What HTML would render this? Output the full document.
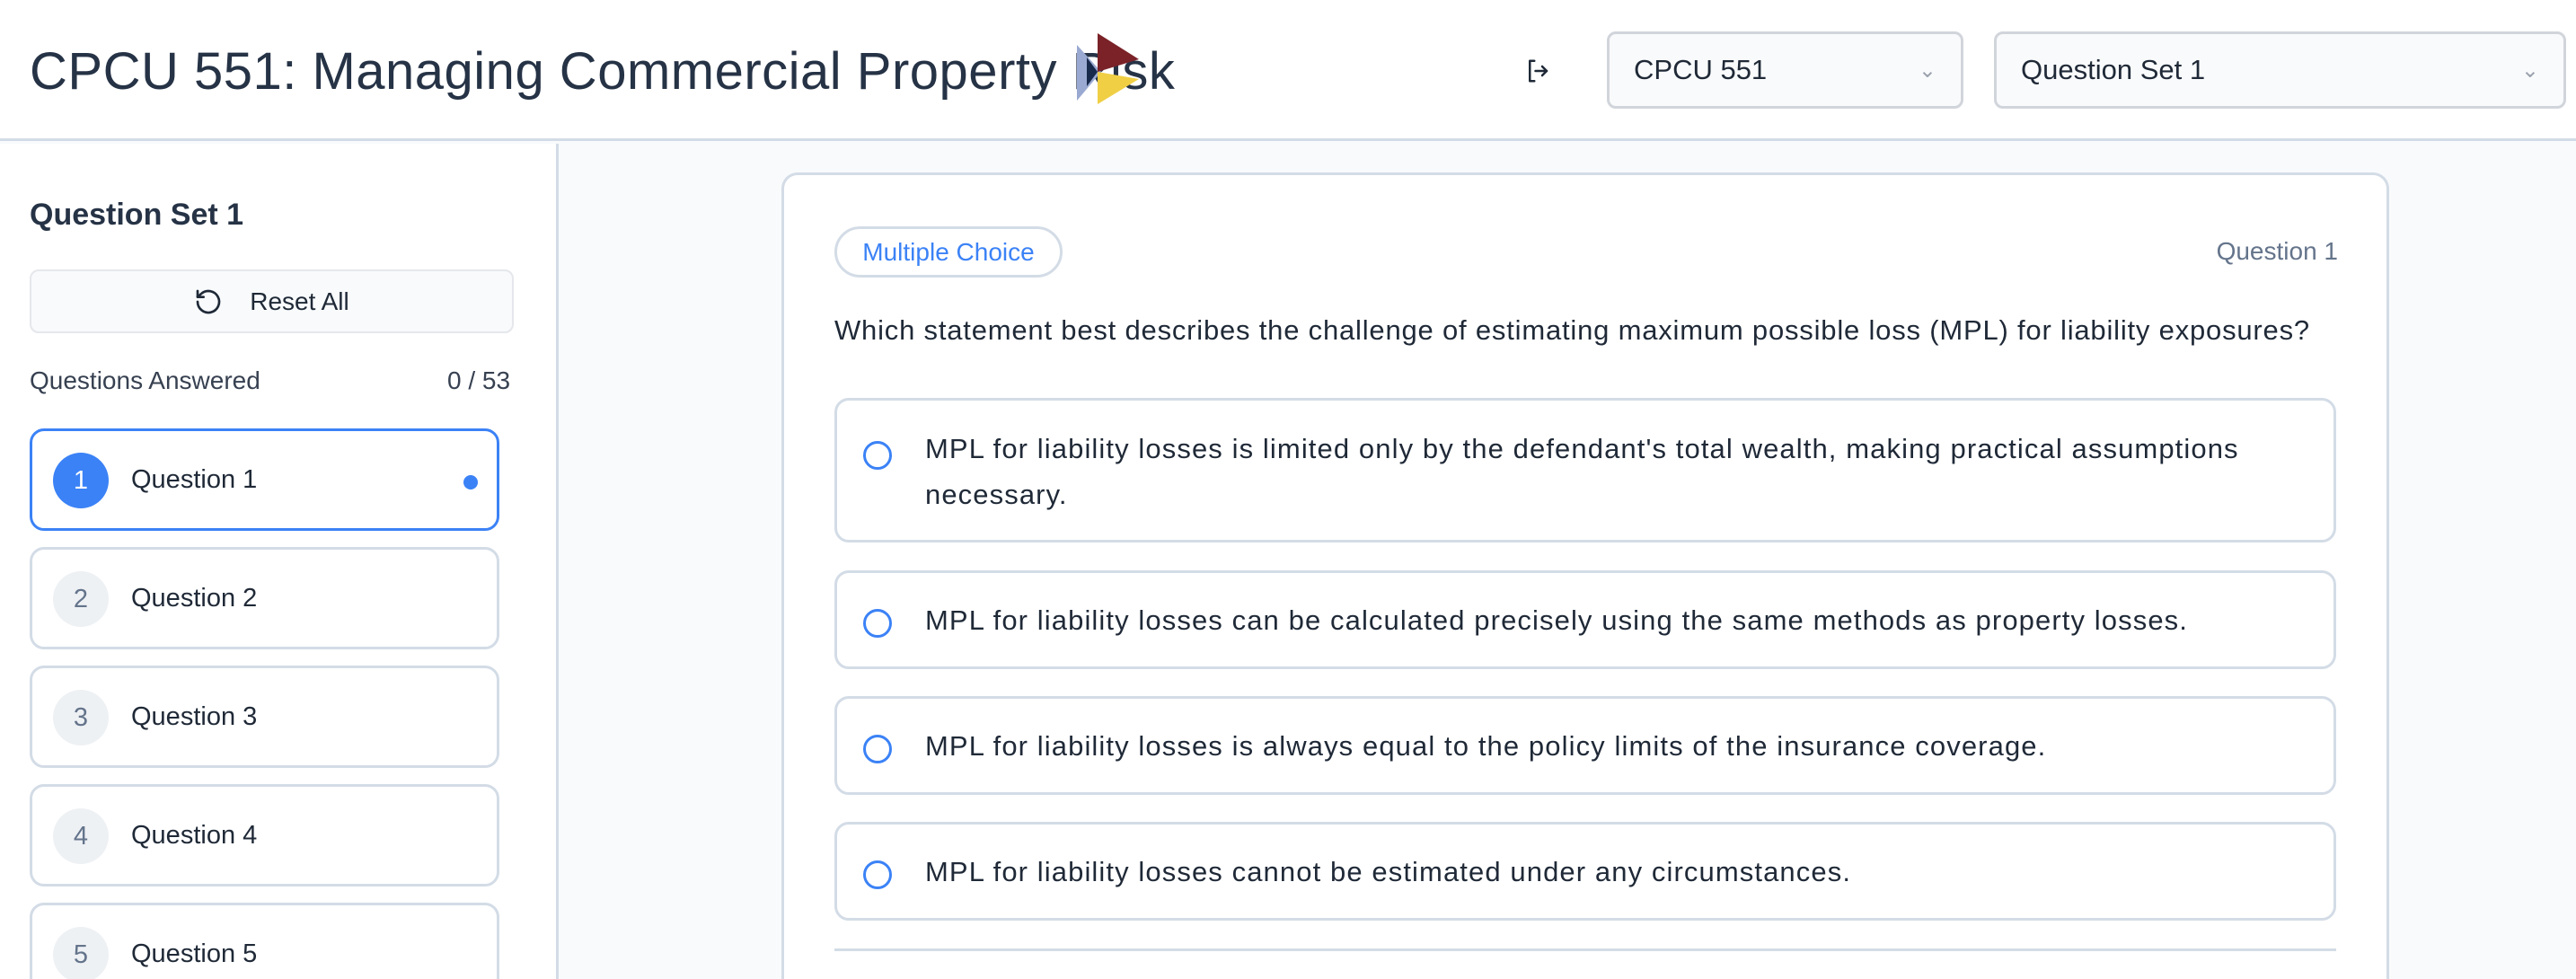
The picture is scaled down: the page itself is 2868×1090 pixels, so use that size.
<!DOCTYPE html>
<html><head><meta charset="utf-8"><style>
*{box-sizing:border-box;margin:0;padding:0}
html{width:2868px;height:1090px;overflow:hidden}
body{width:2868px;height:1090px;overflow:hidden;background:#f8fafc;font-family:"Liberation Sans",sans-serif;color:#1f2937;position:relative}
.abs{position:absolute}
header{position:absolute;left:0;top:0;width:2868px;height:157px;background:#fff;border-bottom:3px solid #d3dce6}
.title{left:33px;top:46px;font-size:58px;color:#263346;white-space:nowrap;letter-spacing:0.5px}
.sel{top:35px;height:86px;border:3px solid #d1d5db;border-radius:10px;background:#f9fafb;font-size:31px;color:#1f2937;padding:0 27px;display:flex;align-items:center;justify-content:space-between}
.side{left:0;top:160px;width:622px;height:930px;background:#fff;border-right:3px solid #d3dce6}
.q{left:33px;width:523px;height:114px;border:3px solid #d3dce6;border-radius:16px;background:#fff}
.q .c{position:absolute;left:23px;top:24px;width:62px;height:62px;border-radius:50%;background:#eef1f4;color:#64748b;font-size:29px;display:flex;align-items:center;justify-content:center}
.q .t{position:absolute;left:110px;top:38px;font-size:29px;color:#1f2937}
.opt{left:929px;width:1672px;border:3px solid #d3dce6;border-radius:16px;background:#fff}
.opt .r{position:absolute;left:29px;width:32px;height:32px;border:3px solid #3b82f6;border-radius:50%}
.opt .t{position:absolute;left:98px;font-size:31px;line-height:51px;color:#1f2937;width:1540px;letter-spacing:1.1px;white-space:nowrap}
</style></head><body>
<header>
<div class="abs title">CPCU 551: Managing Commercial Property Risk</div>
<svg class="abs" style="left:1196px;top:36px" width="80" height="82" viewBox="0 0 80 82">
<polygon points="3,14 30,44 3,76" fill="#9aa9d1"/>
<polygon points="26,1 72,30 26,44" fill="#7a2228"/>
<polygon points="26,44 72,52 26,80" fill="#f0cf45"/>
<polygon points="14,28 26,44 14,60" fill="#172a4c"/>
</svg>
<svg class="abs" style="left:1697px;top:64px" width="30" height="30" viewBox="0 0 24 24" fill="none" stroke="#1f2937" stroke-width="2" stroke-linecap="round" stroke-linejoin="round"><path d="M9 3H5v18h4"/><path d="M10 12h10"/><path d="M16 8l4 4-4 4"/></svg>
<div class="abs sel" style="left:1789px;width:397px"><span>CPCU 551</span><span style="color:#9ca3af;font-size:24px">&#8964;</span></div>
<div class="abs sel" style="left:2220px;width:637px"><span>Question Set 1</span><span style="color:#9ca3af;font-size:24px">&#8964;</span></div>
</header>
<div class="abs side">
<div class="abs" style="left:33px;top:60px;font-size:34px;font-weight:bold;color:#263346">Question Set 1</div>
<div class="abs" style="left:33px;top:140px;width:539px;height:71px;border:2px solid #e5e7eb;border-radius:10px;background:#f8fafc;display:flex;align-items:center;justify-content:center;font-size:28px;color:#1f2937">
<svg width="32" height="32" viewBox="0 0 24 24" fill="none" stroke="#1f2937" stroke-width="2" stroke-linecap="round" stroke-linejoin="round" style="margin-right:30px"><path d="M3 12a9 9 0 1 0 3-6.7L3 8"/><path d="M3 3v5h5"/></svg>Reset All</div>
<div class="abs" style="left:33px;top:248px;font-size:28px;color:#374151">Questions Answered</div>
<div class="abs" style="left:498px;top:248px;font-size:28px;color:#374151">0 / 53</div>
<div class="abs q" style="top:317px;border-color:#3b82f6"><div class="c" style="background:#3b82f6;color:#fff">1</div><div class="t">Question 1</div><div class="abs" style="left:480px;top:49px;width:16px;height:16px;border-radius:50%;background:#3b82f6"></div></div>
<div class="abs q" style="top:449px"><div class="c">2</div><div class="t">Question 2</div></div>
<div class="abs q" style="top:581px"><div class="c">3</div><div class="t">Question 3</div></div>
<div class="abs q" style="top:713px"><div class="c">4</div><div class="t">Question 4</div></div>
<div class="abs q" style="top:845px"><div class="c">5</div><div class="t">Question 5</div></div>
</div>
<div class="abs" style="left:870px;top:192px;width:1790px;height:900px;background:#fff;border:3px solid #d3dce6;border-bottom:none;border-radius:18px 18px 0 0"></div>
<div class="abs" style="left:929px;top:252px;width:254px;height:57px;border:3px solid #d3dce6;border-radius:29px;display:flex;align-items:center;justify-content:center;font-size:28px;color:#3b82f6">Multiple Choice</div>
<div class="abs" style="left:2400px;top:264px;width:203px;text-align:right;font-size:28px;color:#64748b">Question 1</div>
<div class="abs" style="left:929px;top:350px;font-size:31px;color:#1f2937;white-space:nowrap;letter-spacing:0.8px">Which statement best describes the challenge of estimating maximum possible loss (MPL) for liability exposures?</div>
<div class="abs opt" style="top:443px;height:161px"><div class="r" style="top:45px"></div><div class="t" style="top:28px">MPL for liability losses is limited only by the defendant's total wealth, making practical assumptions<br>necessary.</div></div>
<div class="abs opt" style="top:635px;height:110px"><div class="r" style="top:40px"></div><div class="t" style="top:27px">MPL for liability losses can be calculated precisely using the same methods as property losses.</div></div>
<div class="abs opt" style="top:775px;height:110px"><div class="r" style="top:40px"></div><div class="t" style="top:27px">MPL for liability losses is always equal to the policy limits of the insurance coverage.</div></div>
<div class="abs opt" style="top:915px;height:110px"><div class="r" style="top:40px"></div><div class="t" style="top:27px">MPL for liability losses cannot be estimated under any circumstances.</div></div>
<div class="abs" style="left:929px;top:1056px;width:1672px;height:3px;background:#d3dce6"></div>
</body></html>
